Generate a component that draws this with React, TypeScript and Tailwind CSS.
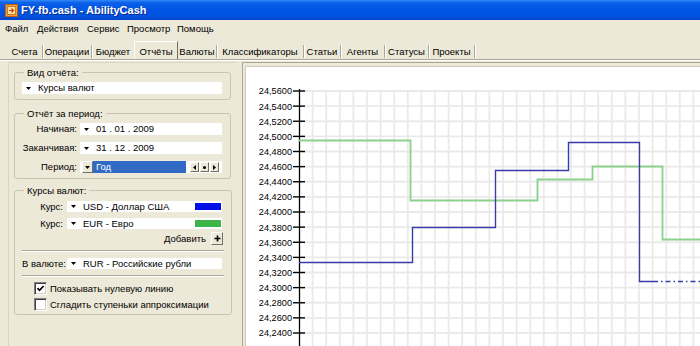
import React from "react";

const tabs = [
  { label: "Счета", w: "w-[36px]" },
  { label: "Операции", w: "w-[49px]" },
  { label: "Бюджет", w: "w-[42px]", noSep: true },
  { label: "Отчёты", w: "w-[44px]", active: true },
  { label: "Валюты", w: "w-[39px]" },
  { label: "Классификаторы", w: "w-[87px]" },
  { label: "Статьи", w: "w-[37px]" },
  { label: "Агенты", w: "w-[44px]" },
  { label: "Статусы", w: "w-[44px]" },
  { label: "Проекты", w: "w-[46px]" },
];

const menu = [
  { label: "Файл", w: "w-[32px]" },
  { label: "Действия", w: "w-[50px]" },
  { label: "Сервис", w: "w-[40px]" },
  { label: "Просмотр", w: "w-[50px]" },
  { label: "Помощь", w: "w-[50px]" },
];

const raised = "bg-[#ece9d8] border border-t-white border-l-white border-r-[#716f64] border-b-[#716f64]";

function Tri() {
  return (
    <svg width="5" height="3" viewBox="0 0 5 3" className="shrink-0">
      <path d="M0 0H5L2.5 3Z" fill="#000" />
    </svg>
  );
}

function Combo({ text, className = "", children }: { text: string; className?: string; children?: React.ReactNode }) {
  return (
    <div className={`bg-white flex items-center pl-[4px] ${className}`}>
      <Tri />
      <span className="ml-[7px] whitespace-nowrap">{text}</span>
      {children}
    </div>
  );
}

function Check({ on }: { on?: boolean }) {
  return (
    <div className="w-[13px] h-[13px] bg-white border border-t-[#808080] border-l-[#808080] border-r-white border-b-white shadow-[inset_1px_1px_0_#404040,inset_-1px_-1px_0_#d4d0c8] flex items-center justify-center shrink-0">
      {on && (
        <svg width="9" height="9" viewBox="0 0 9 9">
          <path d="M1.5 4.2 L3.5 6.3 L7.6 2" stroke="#000" strokeWidth="1.7" fill="none" />
        </svg>
      )}
    </div>
  );
}

function Group({ title, className = "", children }: { title: string; className?: string; children: React.ReactNode }) {
  return (
    <fieldset className={`border border-[#c8c5b4] rounded-[3px] px-[7px] w-[217px] ml-[5px] ${className}`}>
      <legend className="ml-[2px] px-[3px] leading-[13px]">{title}</legend>
      {children}
    </fieldset>
  );
}

function Chart() {
  const hy = Array.from({ length: 18 }, (_, k) => 91 + 15.125 * k);
  const vx = Array.from({ length: 29 }, (_, k) => 299 + 13.6 * (k + 1));
  const labels = ["24,5600", "24,5400", "24,5200", "24,5000", "24,4800", "24,4600", "24,4400", "24,4200", "24,4000", "24,3800", "24,3600", "24,3400", "24,3200", "24,3000", "24,2800", "24,2600", "24,2400", "24,2200"];
  return (
    <svg width="454" height="279" className="block">
      <g transform="translate(-246 -67)">
        {vx.map((x) => (
          <line key={"v" + x} x1={x} x2={x} y1={90} y2={350} stroke="#eaeaea" strokeWidth="1.8" />
        ))}
        {hy.map((y) => (
          <line key={"h" + y} x1={299} x2={702} y1={y} y2={y} stroke="#eaeaea" strokeWidth="1.8" />
        ))}
        <line x1={299.5} x2={299.5} y1={89} y2={350} stroke="#000" strokeWidth="1.3" />
        {hy.map((y, i) => (
          <g key={"t" + y}>
            <line x1={293} x2={305} y1={y} y2={y} stroke="#000" strokeWidth="1.4" />
            <text x={292} y={y + 3.4} textAnchor="end" fontSize="9.2" fontFamily="'Liberation Sans', Arial, sans-serif" fill="#000">
              {labels[i]}
            </text>
          </g>
        ))}
        <path d="M299 140.5 H410.5 V200.5 H537.5 V179.5 H592.5 V166.5 H662.5 V239.5 H702" fill="none" stroke="#8bd08b" strokeWidth="1.8" />
        <path d="M299 262.5 H412.5 V227.5 H495.5 V170.5 H568.5 V142.5 H639.5 V281.5 H653" fill="none" stroke="#3a3aab" strokeWidth="1.4" />
        <path d="M653 281.5 H702" fill="none" stroke="#3a3aab" strokeWidth="1.4" strokeDasharray="5 3 1.5 3" />
      </g>
    </svg>
  );
}

export default function App() {
  return (
    <div className="w-[700px] h-[346px] overflow-hidden bg-[#ece9d8] flex flex-col text-[9.5px] leading-[12px] text-black font-['Liberation_Sans',Arial,sans-serif]">
      {/* title bar */}
      <div className="h-[20px] shrink-0 flex items-center pl-[5px] bg-[linear-gradient(180deg,#3489f6_0%,#0b5fe8_14%,#0055e4_45%,#0053e1_80%,#0142c6_100%)]">
        <svg width="13" height="13" viewBox="0 0 13 13" className="shrink-0">
          <rect x="0.5" y="0.5" width="12" height="12" fill="#f0a040" stroke="#c06010" />
          <rect x="2.5" y="2.5" width="8" height="8" fill="#fde3a0" stroke="#d07820" />
          <path d="M4 6.5 H8.5 M6.5 4.5 L8.5 6.5 L6.5 8.5" stroke="#c04010" strokeWidth="1.2" fill="none" />
        </svg>
        <span className="ml-[3px] text-white font-bold text-[11px] leading-[14px] [text-shadow:1px_1px_0_#0a2a90]">FY-fb.cash - AbilityCash</span>
      </div>

      {/* menu */}
      <div className="h-[18px] shrink-0 flex items-center pl-[5px]">
        {menu.map((m) => (
          <span key={m.label} className={`${m.w} shrink-0`}>{m.label}</span>
        ))}
      </div>

      <div className="h-[2px] shrink-0" />

      {/* tabs */}
      <div className="h-[19px] shrink-0 flex items-end pl-[7px]">
        {tabs.map((t) =>
          t.active ? (
            <div key={t.label} className={`${t.w} h-[18px] shrink-0 flex items-center justify-center pt-[3px] border-t border-l border-white border-r border-r-[#716f64]`}>
              {t.label}
            </div>
          ) : (
            <div key={t.label} className={`${t.w} h-[13px] mb-[1px] pt-[1px] shrink-0 flex items-center justify-center ${t.noSep ? "" : "border-r border-[#aca899] shadow-[1px_0_0_#fff]"}`}>
              {t.label}
            </div>
          )
        )}
      </div>
      <div className="h-[2px] shrink-0 border-t border-b border-t-[#aca899] border-b-white" />
      <div className="h-[1px] shrink-0" />

      {/* content */}
      <div className="flex-1 flex pl-[8px] min-h-0">
        <div className="w-[228px] h-full shrink-0 border-l border-t border-[#d8d5c6] pt-[3px]">
          <Group title="Вид отчёта:" className="pt-[3px] pb-[5px]">
            <Combo text="Курсы валют" className="h-[12px] w-[200px]" />
          </Group>

          <Group title="Отчёт за период:" className="mt-[7px] pt-[3px] pb-[5px]">
            <div className="flex items-center h-[12px]">
              <span className="w-[55px] text-right whitespace-nowrap">Начиная:</span>
              <Combo text="01 . 01 . 2009" className="ml-[3px] h-[12px] w-[142px]" />
            </div>
            <div className="flex items-center h-[12px] mt-[7px]">
              <span className="w-[55px] text-right whitespace-nowrap">Заканчивая:</span>
              <Combo text="31 . 12 . 2009" className="ml-[3px] h-[12px] w-[142px]" />
            </div>
            <div className="flex items-center h-[12px] mt-[7px]">
              <span className="w-[55px] text-right whitespace-nowrap">Период:</span>
              <div className="ml-[3px] w-[142px] h-[12px] bg-white flex items-center">
                <div className={`ml-[2px] w-[11px] h-[12px] flex items-center justify-center ${raised}`}>
                  <Tri />
                </div>
                <div className="w-[93px] h-[12px] bg-[#316ac5] text-white pl-[3px] leading-[12px]">Год</div>
                <div className="flex ml-[4px] gap-[1px]">
                  <div className={`w-[9px] h-[10px] flex items-center justify-center ${raised}`}>
                    <svg width="3" height="5" viewBox="0 0 3 5"><path d="M3 0V5L0 2.5Z" fill="#000" /></svg>
                  </div>
                  <div className={`w-[9px] h-[10px] flex items-center justify-center ${raised}`}>
                    <svg width="3" height="3" viewBox="0 0 3 3"><circle cx="1.5" cy="1.5" r="1.5" fill="#000" /></svg>
                  </div>
                  <div className={`w-[9px] h-[10px] flex items-center justify-center ${raised}`}>
                    <svg width="3" height="5" viewBox="0 0 3 5"><path d="M0 0V5L3 2.5Z" fill="#000" /></svg>
                  </div>
                </div>
              </div>
            </div>
          </Group>

          <Group title="Курсы валют:" className="mt-[5px] pt-[4px] pb-[3px]">
            <div className="flex items-center h-[11px]">
              <span className="w-[41px] text-right">Курс:</span>
              <Combo text="USD - Доллар США" className="ml-[4px] h-[11px] w-[155px]">
                <div className="ml-auto mr-[1px] w-[26px] h-[7px] bg-[#0010e6]" />
              </Combo>
            </div>
            <div className="flex items-center h-[11px] mt-[6px]">
              <span className="w-[41px] text-right">Курс:</span>
              <Combo text="EUR - Евро" className="ml-[4px] h-[11px] w-[155px]">
                <div className="ml-auto mr-[1px] w-[26px] h-[7px] bg-[#3db54a]" />
              </Combo>
            </div>
            <div className="flex items-center justify-end h-[13px] mt-[3px] pr-[1px]">
              <span>Добавить</span>
              <div className={`ml-[5px] w-[12px] h-[13px] flex items-center justify-center ${raised}`}>
                <svg width="7" height="7" viewBox="0 0 7 7"><path d="M3.5 0.5V6.5M0.5 3.5H6.5" stroke="#000" strokeWidth="1.6" /></svg>
              </div>
            </div>
            <div className="h-[2px] mt-[5px] w-[202px] border-t border-b border-t-[#aca899] border-b-white" />
            <div className="flex items-center h-[11px] mt-[6px]">
              <span className="w-[42px] whitespace-nowrap">В валюте:</span>
              <Combo text="RUR - Российские рубли" className="ml-[3px] h-[11px] w-[155px]" />
            </div>
            <div className="h-[2px] mt-[6px] w-[202px] border-t border-b border-t-[#aca899] border-b-white" />
            <div className="flex items-center h-[13px] mt-[5px] pl-[12px]">
              <Check on />
              <span className="ml-[3px]">Показывать нулевую линию</span>
            </div>
            <div className="flex items-center h-[13px] mt-[3px] pl-[12px]">
              <Check />
              <span className="ml-[3px]">Сгладить ступеньки аппроксимации</span>
            </div>
          </Group>
        </div>

        <div className="flex-1 h-full ml-[6px] border-t border-l border-[#aca899] pt-[3px] pl-[2px]">
          <div className="w-full h-full border-t border-l border-[#cfccbc] bg-white overflow-hidden">
            <Chart />
          </div>
        </div>
      </div>
    </div>
  );
}
